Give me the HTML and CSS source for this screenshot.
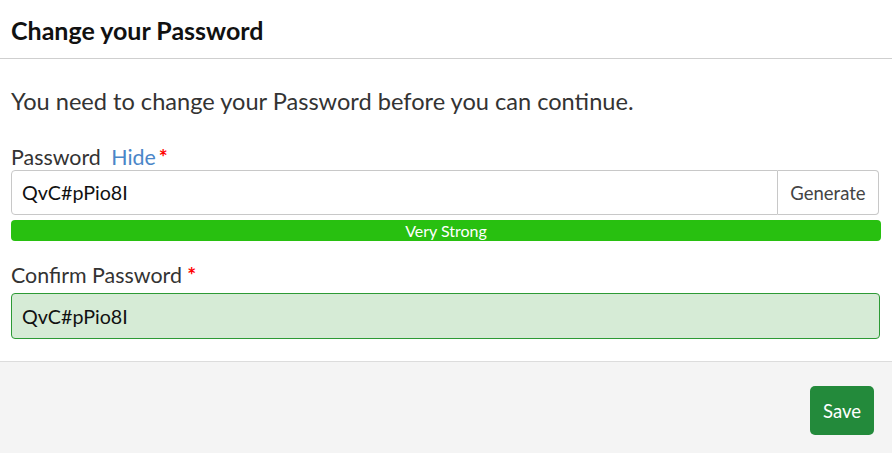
FILE: index.html
```html
<!DOCTYPE html>
<html lang="en">
<head>
  <meta charset="UTF-8">
  <title>Change your Password</title>
  <link rel="stylesheet" href="styles.css">
</head>
<body>
  <div class="modal">
    <header class="modal-header">
      <h1>Change your Password</h1>
    </header>
    <div class="modal-body">
      <p class="intro">You need to change your Password before you can continue.</p>

      <div class="field">
        <label class="field-label">Password <a class="toggle" href="#">Hide</a><span class="req req-tight">*</span></label>
        <div class="input-group">
          <input class="input" type="text" value="QvC#pPio8I">
          <button class="addon">Generate</button>
        </div>
        <div class="strength">Very Strong</div>
      </div>

      <div class="field">
        <label class="field-label">Confirm Password <span class="req">*</span></label>
        <input class="input input-ok" type="text" value="QvC#pPio8I">
      </div>
    </div>
    <footer class="modal-footer">
      <button class="btn-save">Save</button>
    </footer>
  </div>
</body>
</html>
```

FILE: styles.css
```css
* {
  margin: 0;
  padding: 0;
  box-sizing: border-box;
}

body {
  font-family: 'Lato', 'Liberation Sans', sans-serif;
  background: #fff;
  color: #333;
}

.modal {
  width: 892px;
  height: 453px;
  display: flex;
  flex-direction: column;
}

.modal-header {
  height: 59px;
  border-bottom: 1px solid #cfcfcf;
  padding: 14px 11px 0;
}

.modal-header h1 {
  font-size: 25px;
  line-height: 32px;
  font-weight: 700;
  color: #111;
}

.modal-body {
  padding: 28px 11px 0 11px;
  height: 302px;
}

.intro {
  font-size: 23.6px;
  line-height: 28px;
  color: #333;
  margin-bottom: 29px;
}

.field {
  margin-bottom: 21px;
}

.field-label {
  display: block;
  font-size: 21.4px;
  color: #333;
  height: 26px;
  line-height: 26px;
}

.toggle {
  color: #4a86c8;
  text-decoration: none;
  margin-left: 5px;
}

.req {
  color: #f00;
  font-weight: 700;
  font-size: 21px;
}

.req-tight {
  margin-left: 3px;
}

.input-group {
  display: flex;
  margin-right: 2px;
}

.input {
  display: block;
  width: 100%;
  height: 45px;
  border: 1px solid #c8c8c8;
  border-radius: 4px;
  padding: 0 10px;
  font-family: inherit;
  font-size: 19.7px;
  color: #111;
  outline: none;
}

.input-group .input {
  flex: 1;
  border-radius: 4px 0 0 4px;
}

.addon {
  width: 101px;
  border: 1px solid #c8c8c8;
  border-left: none;
  border-radius: 0 4px 4px 0;
  background: #fff;
  font-family: inherit;
  font-size: 18.5px;
  color: #444;
}

.strength {
  margin-top: 5px;
  height: 21px;
  background: #28c010;
  border-radius: 4px;
  color: #fff;
  font-size: 16px;
  text-align: center;
  line-height: 21px;
}

.input-ok {
  background: #d6ebd6;
  border-color: #2d9a35;
  width: 869px;
  height: 46px;
  margin-top: 5px;
}

.modal-footer {
  flex: 1;
  background: #f4f4f4;
  border-top: 1px solid #dcdcdc;
  display: flex;
  justify-content: flex-end;
  align-items: flex-start;
  padding: 24px 18px 0 0;
}

.btn-save {
  width: 64px;
  height: 49px;
  background: #238a3b;
  color: #fff;
  border: none;
  border-radius: 5px;
  font-family: inherit;
  font-size: 18.5px;
}
```
